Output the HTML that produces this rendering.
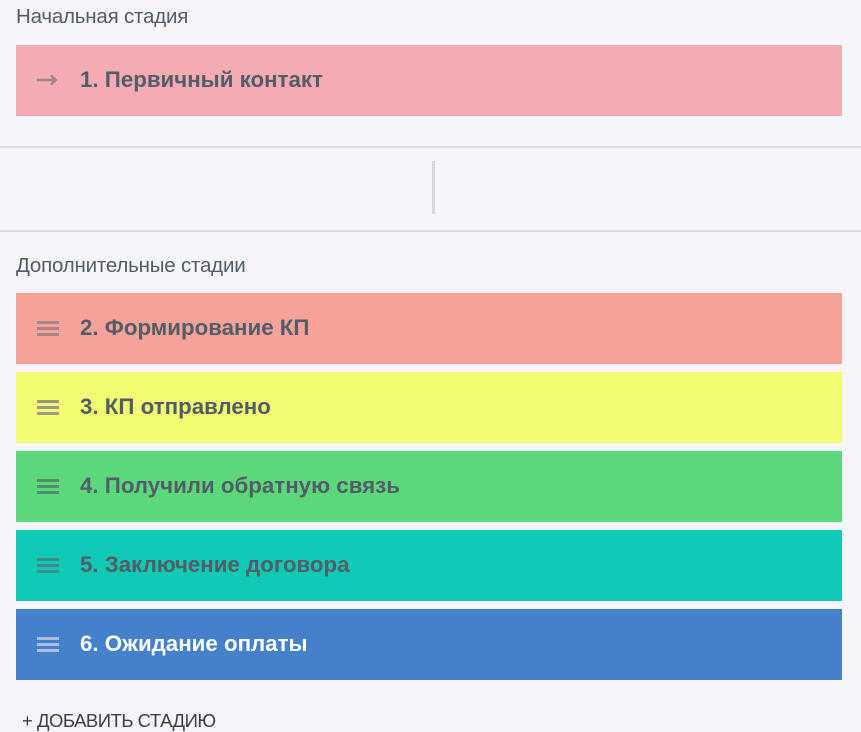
<!DOCTYPE html>
<html><head><meta charset="utf-8"><style>
body{margin:0;width:861px;height:731px;background:#f5f5fa;font-family:"Liberation Sans",sans-serif;position:relative;overflow:hidden}
.lbl{position:absolute;left:16px;font-size:20.5px;color:#535c69;letter-spacing:-0.2px}
.card{position:absolute;left:16px;width:826px;height:71px}
.card .t{position:absolute;left:64px;top:0;line-height:70px;font-size:22.3px;font-weight:bold;color:#535c69}
.ham{position:absolute;left:21px;top:28px;width:22px;height:15px}
.ham i{display:block;height:3px;margin-bottom:3px;background:rgba(120,110,130,.6)}
.line{position:absolute;left:0;width:861px;height:2px;background:#dcdce2}
</style></head><body>
<div class="lbl" style="top:5px">Начальная стадия</div>
<div class="card" style="top:45px;background:#f5aab4">
<svg style="position:absolute;left:21px;top:29px" width="22" height="12"><path d="M0 6H19M14 1.5L19 6L14 10.5" stroke="#9b8591" stroke-width="2.5" fill="none"/></svg>
<div class="t">1. Первичный контакт</div></div>
<div class="line" style="top:146px"></div>
<div style="position:absolute;left:432px;top:161px;width:3px;height:53px;background:#d8dae0"></div>
<div class="line" style="top:230px"></div>
<div class="lbl" style="top:254px">Дополнительные стадии</div>
<div class="card" style="top:293px;background:#f5a398"><div class="ham"><i></i><i></i><i></i></div><div class="t">2. Формирование КП</div></div>
<div class="card" style="top:372px;background:#f3fb72"><div class="ham"><i style="background:#9a9b80"></i><i style="background:#9a9b80"></i><i style="background:#9a9b80"></i></div><div class="t">3. КП отправлено</div></div>
<div class="card" style="top:451px;background:#5bd97a"><div class="ham"><i style="background:#4f8f6a"></i><i style="background:#4f8f6a"></i><i style="background:#4f8f6a"></i></div><div class="t">4. Получили обратную связь</div></div>
<div class="card" style="top:530px;background:#0ec9b5"><div class="ham"><i style="background:#3f8a8a"></i><i style="background:#3f8a8a"></i><i style="background:#3f8a8a"></i></div><div class="t">5. Заключение договора</div></div>
<div class="card" style="top:609px;background:#4580cb"><div class="ham"><i style="background:#a5bfe6"></i><i style="background:#a5bfe6"></i><i style="background:#a5bfe6"></i></div><div class="t" style="color:#fff">6. Ожидание оплаты</div></div>
<div style="position:absolute;left:22px;top:710px;font-size:18.5px;color:#3a3f48;letter-spacing:-0.5px">+ ДОБАВИТЬ СТАДИЮ</div>
</body></html>
